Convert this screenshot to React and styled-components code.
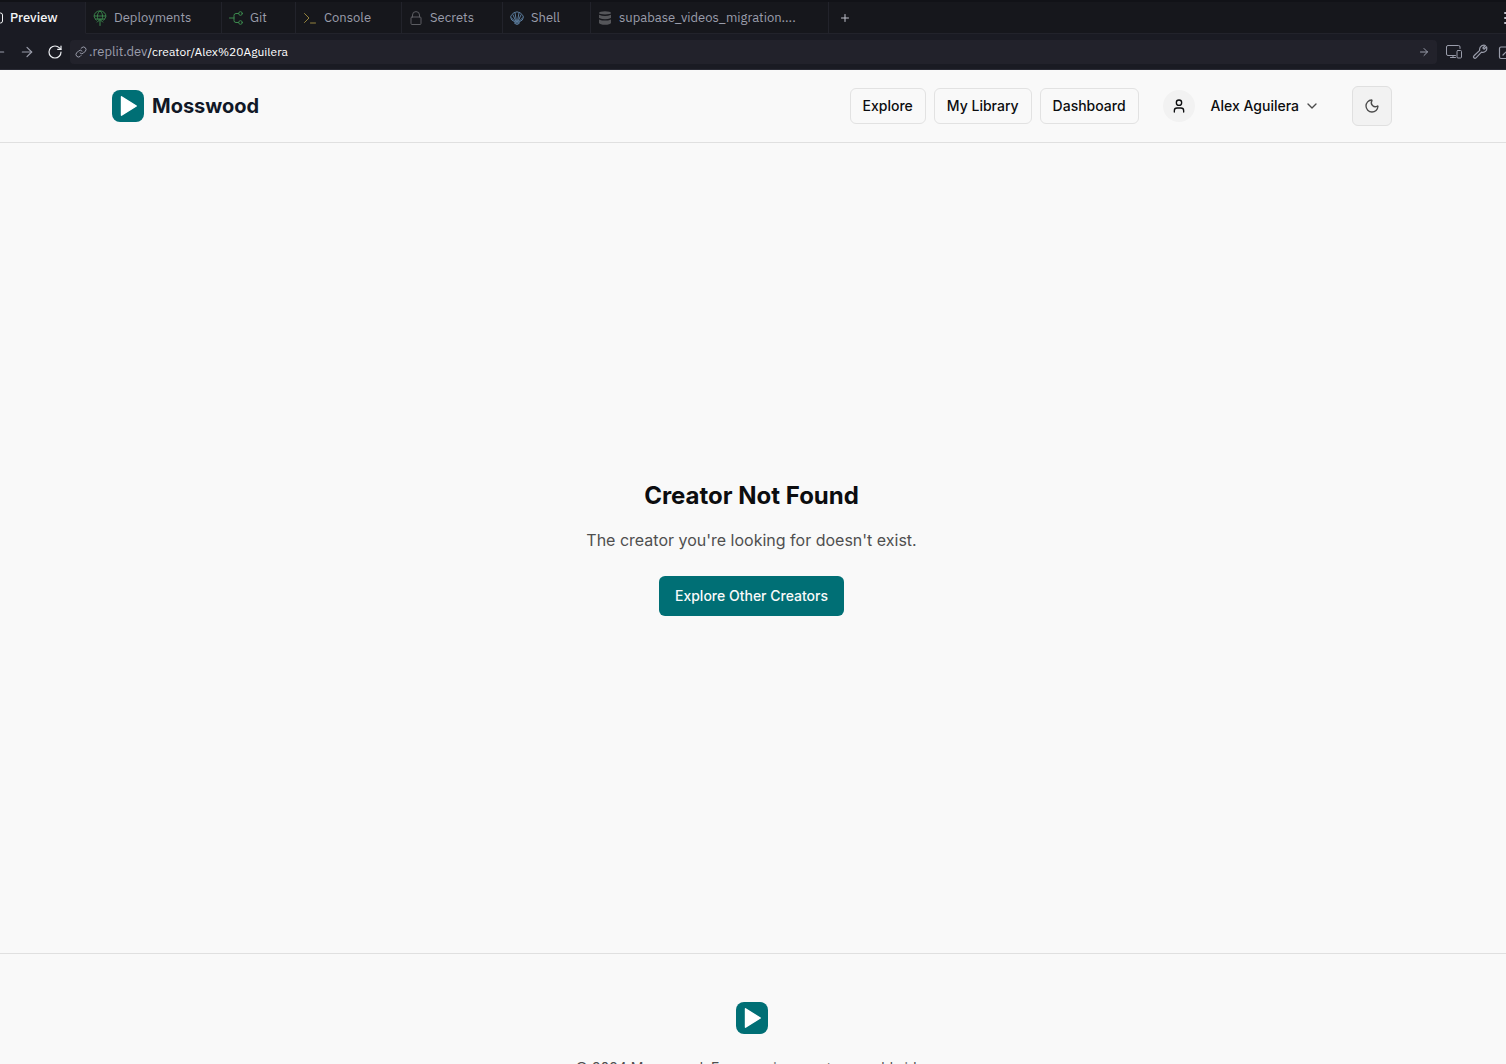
import React from "react";
import styled, { createGlobalStyle } from "styled-components";
import { ArrowLeft, ArrowRight, ChevronDown, Moon, Plus, RotateCw, User } from "lucide-react";

const GlobalStyle = createGlobalStyle`
  *, *::before, *::after { box-sizing: border-box; }
  body { margin: 0; background: #f9f9f9; }
  button, input { font: inherit; color: inherit; }
  svg { display: block; flex: none; }
`;

const Workspace = styled.div`
  height: 100vh;
  display: flex;
  flex-direction: column;
  overflow: hidden;
`;

const Chrome = styled.div`
  flex: none;
  padding-top: 2px;
  border-bottom: 1px solid #2a2b35;
  background: #111217;
  color: #9a9dab;
  font: 13px/20px "IBM Plex Sans", Roboto, "Liberation Sans", sans-serif;
`;

const TabStrip = styled.div`
  display: flex;
  height: 32px;
  background: #16171c;
`;

const Tab = styled.button`
  flex: none;
  display: flex;
  align-items: center;
  gap: 7px;
  width: ${(p) => p.$width}px;
  padding: 0 0 0 7px;
  border: 0;
  border-right: 1px solid #22232b;
  border-bottom: 1px solid ${(p) => (p.$active ? "#1a1b23" : "#22232b")};
  background: ${(p) => (p.$active ? "#1a1b23" : "transparent")};
  color: ${(p) => (p.$active ? "#f4f5f7" : "inherit")};
  font-weight: ${(p) => (p.$active ? 500 : 400)};
  text-align: left;
  white-space: nowrap;
`;

const ActiveTab = styled(Tab)`
  padding: 0;
  overflow: hidden;
  svg { margin-left: -11px; }
`;

const StripRest = styled.div`
  flex: 1;
  display: flex;
  align-items: center;
  justify-content: space-between;
  padding-left: 8px;
  border-bottom: 1px solid #22232b;
  overflow: hidden;
`;

const ToolButton = styled.button`
  flex: none;
  display: grid;
  place-items: center;
  width: 16px;
  height: 24px;
  padding: 0;
  border: 0;
  background: transparent;
  color: ${(p) => p.$color || "#9a9dab"};
`;

const MenuButton = styled(ToolButton)`
  margin-right: -12px;
`;

const AddressRow = styled.div`
  display: flex;
  align-items: center;
  height: 35px;
  padding-top: 1px;
  background: #1a1b23;
  overflow: hidden;
`;

const History = styled.div`
  flex: none;
  display: flex;
  gap: 12px;
  margin-left: -9px;
  margin-right: 7px;
`;

const Address = styled.a`
  flex: 1;
  min-width: 0;
  display: flex;
  align-items: center;
  height: 24px;
  padding: 0 7px 0 5px;
  border-radius: 4px;
  background: #22222b;
  color: #9a9dab;
  text-decoration: none;
  svg:first-child { margin-right: 2px; }
  svg:last-child { margin-left: auto; }
`;

const Path = styled.span`
  color: #ffffff;
  font-size: 12px;
`;

const AddressTools = styled.div`
  flex: none;
  display: flex;
  gap: 10px;
  margin-left: 9px;
  margin-right: -8px;
`;

const Page = styled.div`
  flex: 1;
  min-height: 0;
  overflow-y: auto;
  scrollbar-width: none;
  background: #f9f9f9;
  color: #0c0d0f;
  font: 14px/20px Inter, sans-serif;
`;

const Header = styled.header`
  padding-right: 2px;
  border-bottom: 1px solid #e0e0e0;
`;

const HeaderInner = styled.div`
  display: flex;
  align-items: center;
  justify-content: space-between;
  max-width: 1280px;
  height: 72px;
  margin: 0 auto;
`;

const Brand = styled.a`
  display: flex;
  align-items: center;
  gap: 8px;
  color: #111827;
  font-size: 20px;
  line-height: 28px;
  font-weight: 700;
  text-decoration: none;
`;

const Nav = styled.nav`
  display: flex;
  align-items: center;
  gap: 8px;
`;

const NavLink = styled.a`
  display: flex;
  align-items: center;
  height: 36px;
  padding: 0 12px;
  border: 1px solid #e2e2e2;
  border-radius: 6px;
  color: inherit;
  font-weight: 500;
  text-decoration: none;
  white-space: nowrap;
`;

const Account = styled.button`
  display: flex;
  align-items: center;
  gap: 16px;
  margin: 0 24px 0 16px;
  padding: 0;
  border: 0;
  background: transparent;
  font-weight: 500;
  white-space: nowrap;
`;

const Avatar = styled.span`
  display: grid;
  place-items: center;
  width: 32px;
  height: 32px;
  border-radius: 50%;
  background: #f2f2f2;
`;

const AccountName = styled.span`
  display: flex;
  align-items: center;
  gap: 5px;
`;

const ThemeButton = styled.button`
  display: grid;
  place-items: center;
  width: 40px;
  height: 40px;
  padding: 0;
  border: 1px solid #e0e0e0;
  border-radius: 6px;
  background: #f2f2f2;
  color: #4b4b4b;
`;

const Main = styled.main`
  display: flex;
  flex-direction: column;
  align-items: center;
  justify-content: center;
  min-height: calc(100vh - 254px);
  padding-right: 3px;
  text-align: center;
`;

const Title = styled.h1`
  margin: 0 0 16px;
  font-size: 24px;
  line-height: 32px;
  font-weight: 700;
`;

const Message = styled.p`
  margin: 0 0 24px;
  color: #4f4f4f;
  font-size: 16px;
  line-height: 24px;
`;

const PrimaryLink = styled.a`
  display: flex;
  align-items: center;
  height: 40px;
  padding: 0 16px;
  border-radius: 6px;
  background: #006f75;
  color: #fafafa;
  font-weight: 500;
  text-decoration: none;
`;

const Footer = styled.footer`
  display: flex;
  flex-direction: column;
  align-items: center;
  gap: 24px;
  padding: 48px 2px 48px 0;
  border-top: 1px solid #e0e0e0;
  color: #4f4f4f;
`;

const Copyright = styled.p`
  margin: 0;
`;

const Glyph = ({ size = 16, height = size, box = 16, boxHeight = box, color = "currentColor", children }) => (
  <svg width={size} height={height} viewBox={`0 0 ${box} ${boxHeight}`} fill="none" stroke={color}
    strokeLinecap="round" strokeLinejoin="round" aria-hidden="true">
    {children}
  </svg>
);

const DeployIcon = () => (
  <Glyph size={14} height={16} box={14} boxHeight={16} color="#3c8a4e">
    <path strokeWidth=".9" d="M3.4 10.2A5.9 5.2 0 1 1 10.6 10.2M1.2 6H12.8M5 9.6C3.8 6.6 4.3 3 7 .9C9.7 3 10.2 6.6 9 9.6M2.6 9H11.4" />
    <path d="M7 15.5V9.2M4.3 12.1L7 9.4L9.7 12.1" />
  </Glyph>
);

const GitIcon = () => (
  <Glyph size={14} box={14} color="#3c8a4e">
    <path d="M.5 7H5M9.5 2.5H7Q5 2.5 5 4.5V9.5Q5 11.5 7 11.5H9.5" />
    <circle cx="11.5" cy="2.5" r="1.8" /><circle cx="11.5" cy="11.5" r="1.8" />
  </Glyph>
);

const ConsoleIcon = () => (
  <Glyph size={14} box={14} color="#95843e">
    <path d="M1.5 2.5L6 7L1.5 11.5M7.5 12H12.5" />
  </Glyph>
);

const LockIcon = () => (
  <Glyph size={14} box={14} color="#5c5d62">
    <rect x="2" y="6" width="10" height="7.5" rx="1" />
    <path d="M3.5 6V4Q3.5 .6 7 .6T10.5 4V6" />
  </Glyph>
);

const ShellIcon = () => (
  <Glyph size={14} box={14} color="#5b7c9c">
    <path d="M5 11Q.5 9.5 .6 6Q1 4 2.4 3.4Q3.4 1.2 5.2 1.4Q7 .2 8.8 1.4Q10.6 1.2 11.6 3.4Q13 4 13.4 6Q13.5 9.5 9 11L9 12.5L7 13.5L5 12.5Z" />
    <path d="M6.2 11L3 3.8M6.6 11L5 1.8M7.4 11L9 1.8M7.8 11L11 3.8M5.6 11L1.6 7M8.4 11L12.4 7M5 12H9" />
  </Glyph>
);

const DatabaseIcon = () => (
  <svg width="14" height="14" viewBox="0 0 14 14" fill="#55565a" aria-hidden="true">
    <ellipse cx="7" cy="1.9" rx="6" ry="1.7" />
    <path d="M1 3.7Q7 6.2 13 3.7V7Q7 9.4 1 7Z" />
    <path d="M1 8.4Q7 10.8 13 8.4V12Q12 13.8 7 13.8T1 12Z" />
  </svg>
);

const LinkIcon = () => (
  <Glyph size={12} box={24}>
    <path strokeWidth="2" d="M10 14a5 5 0 0 0 7 0l4-4a5 5 0 0 0-7-7l-2 2M14 10a5 5 0 0 0-7 0l-4 4a5 5 0 0 0 7 7l2-2" />
  </Glyph>
);

const DevicesIcon = () => (
  <Glyph>
    <path d="M9.5 11.5H2Q.5 11.5 .5 10V3Q.5 1.5 2 1.5H12.5Q14 1.5 14 3V4.5M7 11.5V13.5M4.5 13.5H9.5" />
    <rect x="11" y="6.5" width="4.5" height="7.5" rx="1" />
  </Glyph>
);

const WrenchIcon = () => (
  <Glyph>
    <path strokeWidth="1.2" d="M10 1.6Q12 .8 13.3 1.5L10.9 4L12 5.2L14.5 2.8Q15.4 5.3 13.7 7.2Q12 8.9 9.5 8.2L4 13.8Q3 14.8 1.9 13.8Q1 12.8 2 11.8L7.7 6.4Q7 3.5 10 1.6Z" />
  </Glyph>
);

const ExternalIcon = () => (
  <Glyph>
    <path strokeWidth="1.2" d="M8 3H3Q1.5 3 1.5 4.5V13Q1.5 14.5 3 14.5H11.5Q13 14.5 13 13V8M5 11L14 2M10 2H14V6" />
  </Glyph>
);

const Logo = () => (
  <svg width="32" height="32" viewBox="0 0 32 32" aria-hidden="true">
    <rect width="32" height="32" rx="8" fill="#006f75" />
    <path d="M9.5 6.8L24.3 16L9.5 25.2Z" fill="#fff" stroke="#fff" strokeWidth="1.4" strokeLinejoin="round" />
  </svg>
);

const tabs = [
  { label: "Deployments", width: 136, icon: <DeployIcon /> },
  { label: "Git", width: 74, icon: <GitIcon /> },
  { label: "Console", width: 106, icon: <ConsoleIcon /> },
  { label: "Secrets", width: 101, icon: <LockIcon /> },
  { label: "Shell", width: 88, icon: <ShellIcon /> },
  { label: "supabase_videos_migration....", width: 238, icon: <DatabaseIcon /> },
];

const links = ["Explore", "My Library", "Dashboard"];

export default function App() {
  return (
    <Workspace>
      <GlobalStyle />
      <Chrome>
        <TabStrip>
          <ActiveTab $active $width={86}>
            <Glyph size={14} box={14}><rect x="1" y="2" width="12.5" height="10" rx="2" /></Glyph>
            Preview
          </ActiveTab>
          {tabs.map((tab) => (
            <Tab key={tab.label} $width={tab.width}>{tab.icon}{tab.label}</Tab>
          ))}
          <StripRest>
            <ToolButton aria-label="New tab" $color="#c0c2cc"><Plus size={12} strokeWidth={2} /></ToolButton>
            <MenuButton aria-label="Menu" $color="#c0c2cc">
              <Glyph><path d="M3 3H14M3 8H14M3 13H14" strokeWidth="2" /></Glyph>
            </MenuButton>
          </StripRest>
        </TabStrip>
        <AddressRow>
          <History>
            <ToolButton aria-label="Back"><ArrowLeft size={16} strokeWidth={1.8} /></ToolButton>
            <ToolButton aria-label="Forward"><ArrowRight size={16} strokeWidth={1.8} /></ToolButton>
            <ToolButton aria-label="Reload" $color="#eceef2"><RotateCw size={16} strokeWidth={1.8} /></ToolButton>
          </History>
          <Address href="#address">
            <LinkIcon />
            .replit.dev<Path>/creator/Alex%20Aguilera</Path>
            <ArrowRight size={12} strokeWidth={2} />
          </Address>
          <AddressTools>
            <ToolButton aria-label="Device size"><DevicesIcon /></ToolButton>
            <ToolButton aria-label="Developer tools"><WrenchIcon /></ToolButton>
            <ToolButton aria-label="Open in new window"><ExternalIcon /></ToolButton>
          </AddressTools>
        </AddressRow>
      </Chrome>
      <Page>
        <Header>
          <HeaderInner>
            <Brand href="#home"><Logo />Mosswood</Brand>
            <Nav>
              {links.map((label) => <NavLink key={label} href="#nav">{label}</NavLink>)}
              <Account>
                <Avatar><User size={16} /></Avatar>
                <AccountName>Alex Aguilera<ChevronDown size={16} color="#4b4b4b" /></AccountName>
              </Account>
              <ThemeButton aria-label="Switch theme"><Moon size={16} strokeWidth={2} /></ThemeButton>
            </Nav>
          </HeaderInner>
        </Header>
        <Main>
          <Title>Creator Not Found</Title>
          <Message>The creator you're looking for doesn't exist.</Message>
          <PrimaryLink href="#explore">Explore Other Creators</PrimaryLink>
        </Main>
        <Footer>
          <Logo />
          <Copyright>© 2024 Mosswood. Empowering creators worldwide.</Copyright>
        </Footer>
      </Page>
    </Workspace>
  );
}
